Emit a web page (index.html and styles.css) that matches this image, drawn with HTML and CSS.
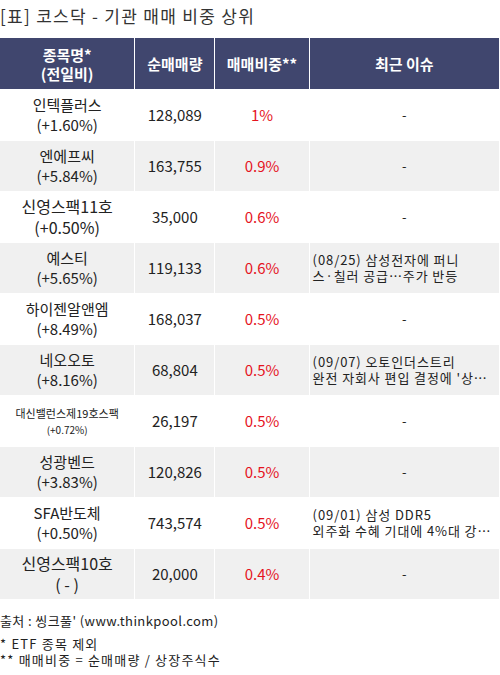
FILE: index.html
```html
<!DOCTYPE html>
<html>
<head>
	<meta charset="utf-8">
	<link rel="stylesheet" href="styles.css">
	<title>코스닥 - 기관 매매 비중 상위</title>
</head>
<body>
	<h2 class="titre">[표] 코스닥 - 기관 매매 비중 상위</h2>

	<table class="tableau">
		<tr class="entete">
			<th class="c1">종목명*<br>(전일비)</th>
			<th class="c2">순매매량</th>
			<th class="c3">매매비중**</th>
			<th class="c4">최근 이슈</th>
		</tr>
		<tr>
			<td>인텍플러스<br>(+1.60%)</td>
			<td>128,089</td>
			<td class="rouge">1%</td>
			<td class="vide">-</td>
		</tr>
		<tr class="gris">
			<td>엔에프씨<br>(+5.84%)</td>
			<td>163,755</td>
			<td class="rouge">0.9%</td>
			<td class="vide">-</td>
		</tr>
		<tr>
			<td class="grand">신영스팩11호<br>(+0.50%)</td>
			<td>35,000</td>
			<td class="rouge">0.6%</td>
			<td class="vide">-</td>
		</tr>
		<tr class="gris">
			<td>예스티<br>(+5.65%)</td>
			<td>119,133</td>
			<td class="rouge">0.6%</td>
			<td class="issue">(08/25) 삼성전자에 퍼니<br>스·칠러 공급…주가 반등</td>
		</tr>
		<tr>
			<td>하이젠알앤엠<br>(+8.49%)</td>
			<td>168,037</td>
			<td class="rouge">0.5%</td>
			<td class="vide">-</td>
		</tr>
		<tr class="gris">
			<td>네오오토<br>(+8.16%)</td>
			<td>68,804</td>
			<td class="rouge">0.5%</td>
			<td class="issue">(09/07) 오토인더스트리<br>완전 자회사 편입 결정에 '상…</td>
		</tr>
		<tr>
			<td class="petit">대신밸런스제19호스팩<br><span>(+0.72%)</span></td>
			<td>26,197</td>
			<td class="rouge">0.5%</td>
			<td class="vide">-</td>
		</tr>
		<tr class="gris">
			<td>성광벤드<br>(+3.83%)</td>
			<td>120,826</td>
			<td class="rouge">0.5%</td>
			<td class="vide">-</td>
		</tr>
		<tr>
			<td>SFA반도체<br>(+0.50%)</td>
			<td>743,574</td>
			<td class="rouge">0.5%</td>
			<td class="issue">(09/01) 삼성 DDR5<br>외주화 수혜 기대에 4%대 강…</td>
		</tr>
		<tr class="gris">
			<td class="grand">신영스팩10호<br>( - )</td>
			<td>20,000</td>
			<td class="rouge">0.4%</td>
			<td class="vide">-</td>
		</tr>
	</table>

	<p class="source">출처 : 씽크풀' (www.thinkpool.com)</p>
	<p class="notes">* ETF 종목 제외<br>** 매매비중 = 순매매량 / 상장주식수</p>
</body>
</html>
```

FILE: styles.css
```css
body {
	margin: 0;
	background-color: white;
	color: #222;
	font-family: "Noto Sans CJK KR", "Noto Sans", sans-serif;
}

.titre {
	margin: 0;
	padding: 5px 0 0 0;
	height: 32px;
	font-size: 17px;
	font-weight: normal;
	line-height: 22px;
	letter-spacing: 1.3px;
	color: #333;
}

.tableau {
	width: 501px;
	margin-left: -1px;
	border-collapse: separate;
	border-spacing: 1px;
	table-layout: fixed;
}

.c1 { width: 134px; }
.c2 { width: 79px; }
.c3 { width: 93px; }
.c4 { width: 189px; }

.entete th {
	height: 51px;
	padding: 0;
	background-color: #40466e;
	color: white;
	font-size: 15px;
	font-weight: bold;
	line-height: 19px;
	text-align: center;
}

td {
	height: 50px;
	padding: 0;
	text-align: center;
	font-size: 15px;
	line-height: 20px;
	color: #222;
}

.gris td {
	background-color: #f0f0f0;
}

.grand {
	font-size: 16px;
	line-height: 21px;
}

.petit {
	font-size: 11px;
	line-height: 16px;
}
.petit span {
	font-size: 10px;
}

.rouge {
	color: #e5141e;
}

.vide {
	font-size: 13px;
}

.issue {
	text-align: left;
	padding-left: 3px;
	font-size: 13px;
	line-height: 16px;
	letter-spacing: 0.9px;
	white-space: nowrap;
	overflow: hidden;
}

.source {
	margin: 12px 0 0 0;
	font-size: 13px;
	line-height: 18px;
	letter-spacing: 0.4px;
	color: #222;
}

.notes {
	margin: 6px 0 0 0;
	font-size: 13px;
	line-height: 16px;
	letter-spacing: 1.2px;
	color: #222;
}
```
